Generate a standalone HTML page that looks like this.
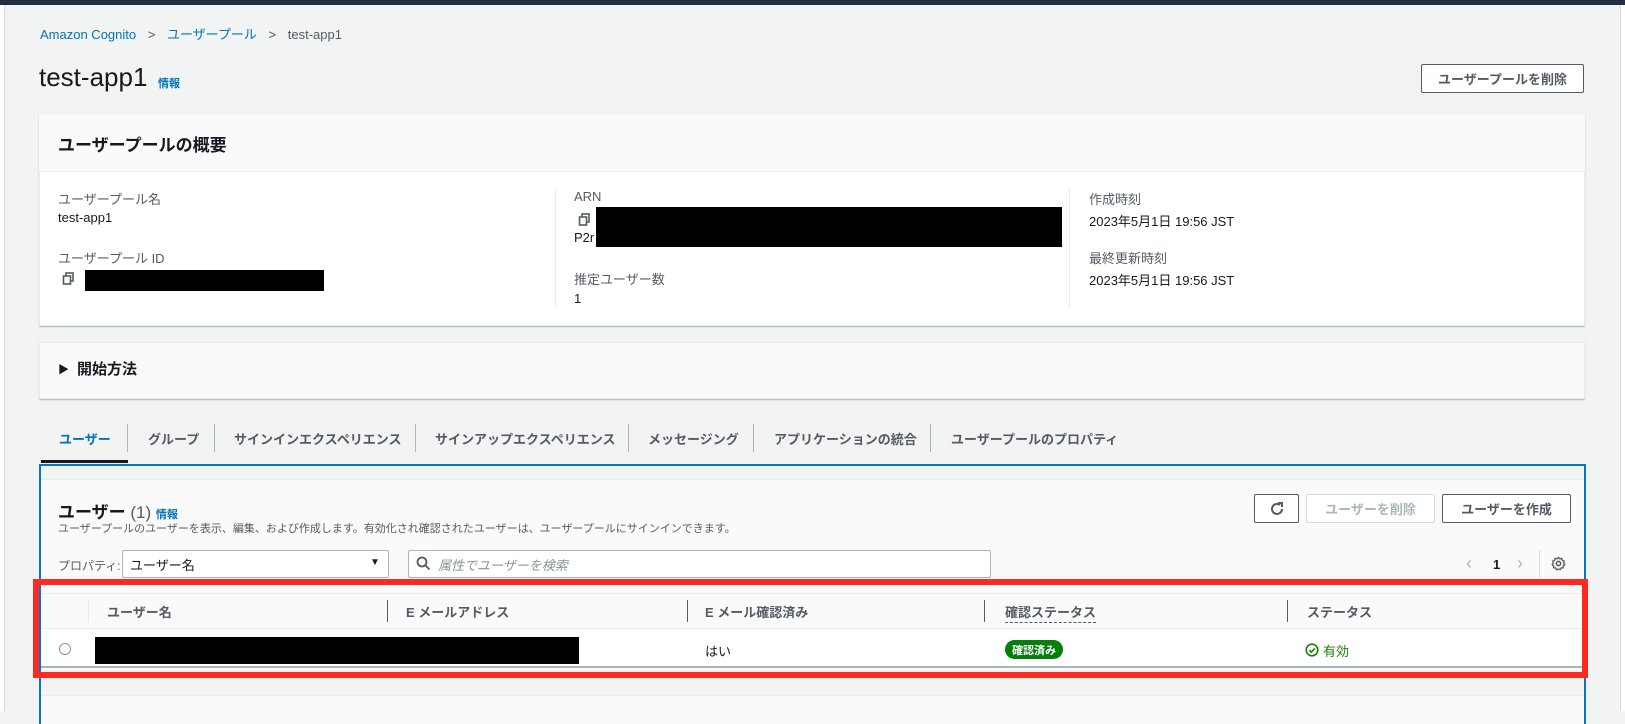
<!DOCTYPE html>
<html><head><meta charset="utf-8"><style>
*{box-sizing:border-box;margin:0;padding:0}
body{width:1625px;height:711px;overflow:hidden;background:#f2f3f3;font-family:"Liberation Sans","Noto Sans CJK JP",sans-serif;color:#16191f;position:relative;font-size:13px}
.a{position:absolute;white-space:nowrap}
.blk{position:absolute;background:#000}
.lbl{color:#545b64;font-size:13px}
.btn{position:absolute;border:1px solid #545b64;background:#fff;border-radius:2px;font-weight:bold;color:#545b64;font-size:13px;display:flex;align-items:center;justify-content:center}
.tab{position:absolute;top:429px;font-weight:bold;color:#545b64;font-size:13px}
.tdiv{position:absolute;top:424px;width:1px;height:28px;background:#aab7b8}
.hd{position:absolute;top:602px;font-weight:bold;color:#545b64;font-size:13px}
.hdiv{position:absolute;top:600px;width:1px;height:22px;background:#545b64}
</style></head><body>
<div class="a" style="left:0;top:0;width:1625px;height:5px;background:#232f3e"></div>
<div class="a" style="left:0;top:5px;width:4px;height:706px;background:#fff"></div>
<div class="a" style="left:4px;top:5px;width:1px;height:706px;background:#d5dbdb"></div>
<div class="a" style="left:1620px;top:5px;width:5px;height:706px;background:#fff;border-left:1px solid #d5dbdb"></div>

<div class="a" style="left:40px;top:24px;font-size:13px;color:#0073bb">Amazon Cognito <span style="color:#545b64;margin:0 8px">&gt;</span> ユーザープール <span style="color:#545b64;margin:0 8px">&gt;</span> <span style="color:#545b64">test-app1</span></div>
<div class="a" style="left:39px;top:62px;font-size:26px">test-app1</div>
<div class="a" style="left:158px;top:75px;font-size:11px;font-weight:bold;color:#0073bb">情報</div>
<div class="btn" style="left:1421px;top:64px;width:163px;height:29px">ユーザープールを削除</div>

<div class="a" style="left:39px;top:115px;width:1546px;height:211px;background:#fff;box-shadow:0 1px 1px #aab7b8;border:1px solid #eaeded"></div>
<div class="a" style="left:39px;top:115px;width:1546px;height:57px;background:#fafafa;border-bottom:1px solid #eaeded"></div>
<div class="a" style="left:58px;top:131px;font-size:17px;font-weight:bold">ユーザープールの概要</div>
<div class="a" style="left:555px;top:188px;width:1px;height:120px;background:#eaeded"></div>
<div class="a" style="left:1069px;top:188px;width:1px;height:120px;background:#eaeded"></div>
<div class="a lbl" style="left:58px;top:189px">ユーザープール名</div>
<div class="a" style="left:58px;top:210px">test-app1</div>
<div class="a lbl" style="left:58px;top:248px">ユーザープール ID</div>
<svg class="a" style="left:62px;top:272px" width="13" height="13" viewBox="0 0 13 13"><rect x="4" y="1" width="7" height="8" fill="none" stroke="#545b64" stroke-width="1.6"/><rect x="1.5" y="4" width="7" height="8" fill="#fff" stroke="#545b64" stroke-width="1.6"/></svg>
<div class="blk" style="left:85px;top:270px;width:239px;height:21px"></div>
<div class="a lbl" style="left:574px;top:189px">ARN</div>
<svg class="a" style="left:578px;top:213px" width="13" height="13" viewBox="0 0 13 13"><rect x="4" y="1" width="7" height="8" fill="none" stroke="#545b64" stroke-width="1.6"/><rect x="1.5" y="4" width="7" height="8" fill="#fff" stroke="#545b64" stroke-width="1.6"/></svg>
<div class="a" style="left:574px;top:230px">P2r</div>
<div class="blk" style="left:596px;top:207px;width:466px;height:40px"></div>
<div class="a lbl" style="left:574px;top:269px">推定ユーザー数</div>
<div class="a" style="left:574px;top:291px">1</div>
<div class="a lbl" style="left:1089px;top:189px">作成時刻</div>
<div class="a" style="left:1089px;top:211px">2023年5月1日 19:56 JST</div>
<div class="a lbl" style="left:1089px;top:248px">最終更新時刻</div>
<div class="a" style="left:1089px;top:270px">2023年5月1日 19:56 JST</div>

<div class="a" style="left:39px;top:342px;width:1546px;height:57px;background:#fafafa;border:1px solid #eaeded;box-shadow:0 1px 1px #aab7b8"></div>
<div class="a" style="left:58px;top:361px;font-size:11px">▶</div>
<div class="a" style="left:77px;top:358px;font-size:15px;font-weight:bold">開始方法</div>

<div class="tab" style="left:59px;color:#0073bb">ユーザー</div>
<div class="a" style="left:41px;top:460px;width:87px;height:3px;background:#16191f"></div>
<div class="tdiv" style="left:127px"></div>
<div class="tab" style="left:148px">グループ</div>
<div class="tdiv" style="left:214px"></div>
<div class="tab" style="left:234px">サインインエクスペリエンス</div>
<div class="tdiv" style="left:415px"></div>
<div class="tab" style="left:435px">サインアップエクスペリエンス</div>
<div class="tdiv" style="left:628px"></div>
<div class="tab" style="left:648px">メッセージング</div>
<div class="tdiv" style="left:753px"></div>
<div class="tab" style="left:774px">アプリケーションの統合</div>
<div class="tdiv" style="left:930px"></div>
<div class="tab" style="left:951px">ユーザープールのプロパティ</div>

<div class="a" style="left:39px;top:464px;width:1547px;height:260px;border:2px solid #0972d3;border-bottom:none;background:#fafafa"></div>
<div class="a" style="left:41px;top:466px;width:1543px;height:14px;background:#f2f3f3;border-bottom:1px solid #eaeded"></div>
<div class="a" style="left:58px;top:498px;font-size:17px;font-weight:bold">ユーザー <span style="font-weight:normal;color:#545b64">(1)</span> <span style="font-size:11px;color:#0073bb">情報</span></div>
<div class="a" style="left:58px;top:520px;font-size:11px;color:#545b64">ユーザープールのユーザーを表示、編集、および作成します。有効化され確認されたユーザーは、ユーザープールにサインインできます。</div>
<div class="btn" style="left:1254px;top:494px;width:45px;height:29px"><svg width="18" height="18" viewBox="0 0 18 18"><path d="M14 9a5 5 0 1 1-2-4" fill="none" stroke="#545b64" stroke-width="2"/><path d="M10 3h4v4" fill="none" stroke="#545b64" stroke-width="2"/></svg></div>
<div class="btn" style="left:1306px;top:494px;width:129px;height:29px;color:#aab7b8;border-color:#d5dbdb">ユーザーを削除</div>
<div class="btn" style="left:1442px;top:494px;width:129px;height:29px">ユーザーを作成</div>

<div class="a lbl" style="left:58px;top:557px;font-size:12px">プロパティ:</div>
<div class="a" style="left:122px;top:550px;width:267px;height:28px;background:#fff;border:1px solid #aab7b8;border-radius:2px"></div>
<div class="a" style="left:130px;top:555px;font-size:13px">ユーザー名</div>
<div class="a" style="left:370px;top:557px;font-size:10px">▼</div>
<div class="a" style="left:408px;top:550px;width:583px;height:28px;background:#fff;border:1px solid #aab7b8;border-radius:2px"></div>
<svg class="a" style="left:416px;top:556px" width="15" height="15" viewBox="0 0 15 15"><circle cx="6" cy="6" r="4.5" fill="none" stroke="#545b64" stroke-width="1.8"/><path d="M9.5 9.5l4 4" stroke="#545b64" stroke-width="1.8"/></svg>
<div class="a" style="left:438px;top:555px;font-style:italic;color:#879596">属性でユーザーを検索</div>
<div class="a" style="left:1466px;top:553px;font-size:18px;color:#aab7b8">&#x2039;</div>
<div class="a" style="left:1493px;top:557px;font-weight:bold">1</div>
<div class="a" style="left:1517px;top:553px;font-size:18px;color:#aab7b8">&#x203a;</div>
<div class="a" style="left:1539px;top:550px;width:1px;height:28px;background:#d5dbdb"></div>
<svg class="a" style="left:1551px;top:556px" width="15" height="15" viewBox="0 0 16 16"><circle cx="8" cy="8" r="2.3" fill="none" stroke="#545b64" stroke-width="1.6"/><path d="M8 1.5l1.4 1.6 2.1-.5.6 2.1 2 .9-.6 2 1.2 1.7-1.8 1.2.1 2.1-2.2.2-1 1.9-2-.9-1.9.9-1-1.9-2.2-.2.1-2.1L1.3 9.2l1.2-1.7-.6-2 2-.9.6-2.1 2.1.5z" fill="none" stroke="#545b64" stroke-width="1.4"/></svg>

<div class="a" style="left:41px;top:593px;width:1543px;height:36px;background:#fafafa;border-top:1px solid #eaeded;border-bottom:1px solid #eaeded"></div>
<div class="a" style="left:41px;top:629px;width:1543px;height:39px;background:#fff;border-bottom:2px solid #aab7b8"></div>
<div class="a" style="left:41px;top:670px;width:1543px;height:26px;background:#f2f3f3;border-bottom:1px solid #eaeded"></div>
<div class="hdiv" style="left:88px;background:#eaeded"></div>
<div class="hd" style="left:107px">ユーザー名</div>
<div class="hdiv" style="left:387px"></div>
<div class="hd" style="left:406px">E メールアドレス</div>
<div class="hdiv" style="left:687px"></div>
<div class="hd" style="left:705px">E メール確認済み</div>
<div class="hdiv" style="left:984px"></div>
<div class="hd" style="left:1005px;border-bottom:1px dashed #545b64;padding-bottom:1px">確認ステータス</div>
<div class="hdiv" style="left:1287px"></div>
<div class="hd" style="left:1307px">ステータス</div>
<div class="a" style="left:59px;top:643px;width:12px;height:12px;border:1px solid #879596;border-radius:50%;background:#fff"></div>
<div class="blk" style="left:95px;top:637px;width:484px;height:27px"></div>
<div class="a" style="left:705px;top:641px">はい</div>
<div class="a" style="left:1005px;top:640px;width:58px;height:19px;border-radius:10px;background:#037f0c;color:#fff;font-size:11px;font-weight:bold;display:flex;align-items:center;justify-content:center">確認済み</div>
<svg class="a" style="left:1305px;top:643px" width="14" height="14" viewBox="0 0 14 14"><circle cx="7" cy="7" r="5.8" fill="none" stroke="#1d8102" stroke-width="1.6"/><path d="M4.3 7.2l2 2 3.5-3.8" fill="none" stroke="#1d8102" stroke-width="1.6"/></svg>
<div class="a" style="left:1323px;top:641px;color:#1d8102">有効</div>

<div class="a" style="left:33px;top:579px;width:1555px;height:99px;border:6px solid #ff2a1f"></div>
</body></html>
